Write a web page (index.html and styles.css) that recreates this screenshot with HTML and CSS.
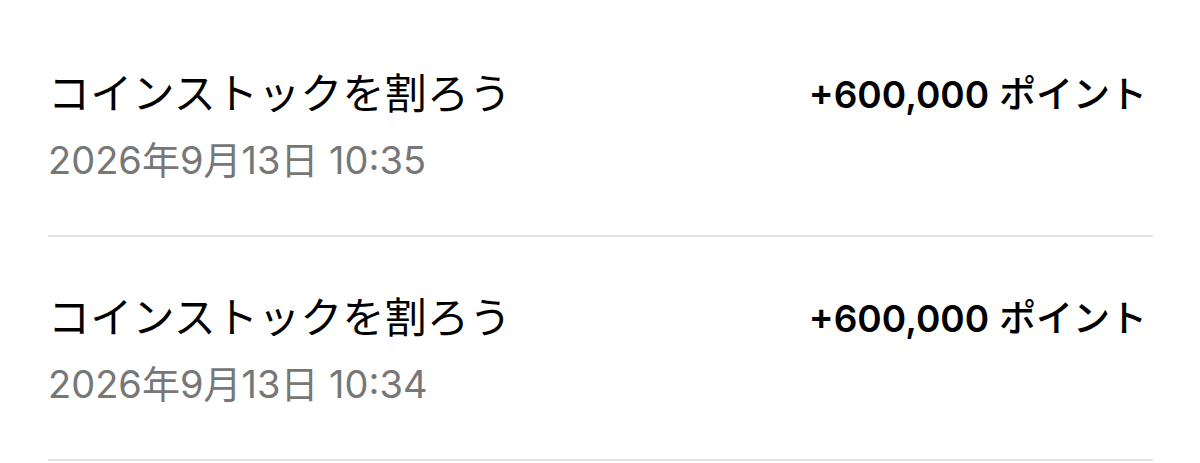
FILE: index.html
```html
<!DOCTYPE html>
<html lang="ja">
<head>
  <meta charset="UTF-8">
  <title>ポイント履歴</title>
  <meta name="viewport" content="width=device-width, initial-scale=1.0">
  <link rel="stylesheet" href="styles.css">
</head>
<body>

<!-- ポイント履歴 -->
<div class="history">
  <div class="row">
    <div class="row-main">
      <div class="title">コインストックを割ろう</div>
      <div class="date">2026年9月13日 10:35</div>
    </div>
    <div class="amount"><span class="num">+600,000</span> ポイント</div>
  </div>

  <div class="row">
    <div class="row-main">
      <div class="title">コインストックを割ろう</div>
      <div class="date">2026年9月13日 10:34</div>
    </div>
    <div class="amount"><span class="num">+600,000</span> ポイント</div>
  </div>
</div>

</body>
</html>
```

FILE: styles.css
```css
body {
  font-family: Inter, "Noto Sans CJK JP", sans-serif;
  background-color: #fff;
  color: #000;
  margin: 0;
  padding: 0;
}

.history {
  padding: 13px 47px 0 48px;
}

.row {
  display: flex;
  justify-content: space-between;
  align-items: flex-start;
  height: 222px;
  border-bottom: 2px solid #e4e4e4;
}

.row-main {
  display: flex;
  flex-direction: column;
}

.title {
  font-size: 42px;
  line-height: 50px;
  margin-top: 56px;
  letter-spacing: 0.2px;
}

.date {
  font-size: 38px;
  line-height: 44px;
  margin-top: 19px;
  color: #777;
}

.amount {
  font-size: 37px;
  font-weight: 500;
  line-height: 50px;
  margin-top: 57px;
  margin-right: 6px;
}

.num {
  font-weight: 600;
}
```
